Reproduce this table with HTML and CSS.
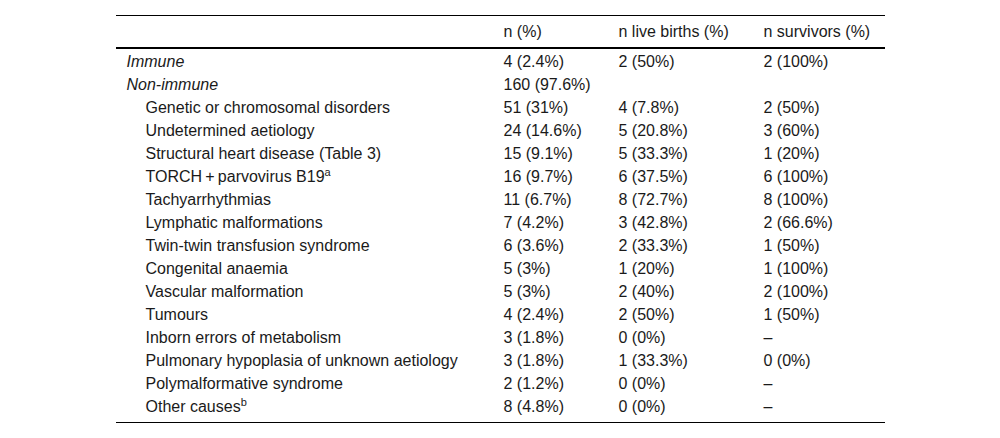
FILE: index.html
```
<!DOCTYPE html>
<html>
<head>
<meta charset="utf-8">
<link rel="stylesheet" href="styles.css">
</head>
<body>
<table class="tbl">
  <colgroup>
    <col class="c1"><col class="c2"><col class="c3"><col class="c4">
  </colgroup>
  <thead>
    <tr><th></th><th>n (%)</th><th>n live births (%)</th><th>n survivors (%)</th></tr>
  </thead>
  <tbody>
    <tr><td><i>Immune</i></td><td>4 (2.4%)</td><td>2 (50%)</td><td>2 (100%)</td></tr>
    <tr><td><i>Non-immune</i></td><td>160 (97.6%)</td><td></td><td></td></tr>
    <tr><td class="ind">Genetic or chromosomal disorders</td><td>51 (31%)</td><td>4 (7.8%)</td><td>2 (50%)</td></tr>
    <tr><td class="ind">Undetermined aetiology</td><td>24 (14.6%)</td><td>5 (20.8%)</td><td>3 (60%)</td></tr>
    <tr><td class="ind">Structural heart disease (Table 3)</td><td>15 (9.1%)</td><td>5 (33.3%)</td><td>1 (20%)</td></tr>
    <tr><td class="ind">TORCH&thinsp;+&thinsp;parvovirus B19<sup>a</sup></td><td>16 (9.7%)</td><td>6 (37.5%)</td><td>6 (100%)</td></tr>
    <tr><td class="ind">Tachyarrhythmias</td><td>11 (6.7%)</td><td>8 (72.7%)</td><td>8 (100%)</td></tr>
    <tr><td class="ind">Lymphatic malformations</td><td>7 (4.2%)</td><td>3 (42.8%)</td><td>2 (66.6%)</td></tr>
    <tr><td class="ind">Twin-twin transfusion syndrome</td><td>6 (3.6%)</td><td>2 (33.3%)</td><td>1 (50%)</td></tr>
    <tr><td class="ind">Congenital anaemia</td><td>5 (3%)</td><td>1 (20%)</td><td>1 (100%)</td></tr>
    <tr><td class="ind">Vascular malformation</td><td>5 (3%)</td><td>2 (40%)</td><td>2 (100%)</td></tr>
    <tr><td class="ind">Tumours</td><td>4 (2.4%)</td><td>2 (50%)</td><td>1 (50%)</td></tr>
    <tr><td class="ind">Inborn errors of metabolism</td><td>3 (1.8%)</td><td>0 (0%)</td><td>–</td></tr>
    <tr><td class="ind">Pulmonary hypoplasia of unknown aetiology</td><td>3 (1.8%)</td><td>1 (33.3%)</td><td>0 (0%)</td></tr>
    <tr><td class="ind">Polymalformative syndrome</td><td>2 (1.2%)</td><td>0 (0%)</td><td>–</td></tr>
    <tr class="last"><td class="ind">Other causes<sup>b</sup></td><td>8 (4.8%)</td><td>0 (0%)</td><td>–</td></tr>
  </tbody>
</table>
</body>
</html>
```
FILE: styles.css
```
html, body {
  margin: 0;
  padding: 0;
  background: #fff;
}
body {
  padding-top: 15px;
  font-family: "Liberation Sans", Arial, sans-serif;
  font-size: 16px;
  color: #1a1a1a;
}
.tbl {
  width: 769px;
  margin: 0 auto;
  border-collapse: collapse;
  table-layout: fixed;
  border-top: 1px solid #000;
  border-bottom: 1px solid #000;
}
.c1 { width: 377px; }
.c2 { width: 115px; }
.c3 { width: 145px; }
.c4 { width: 132px; }
.tbl th {
  font-weight: normal;
  text-align: left;
  line-height: 17px;
  padding: 7px 0 7px 11px;
  border-bottom: 2px solid #000;
}
.tbl td {
  line-height: 17px;
  padding: 4px 0 2px 11px;
  white-space: nowrap;
}
.tbl td.ind {
  padding-left: 30px;
}
.tbl tr.last td {
  padding-bottom: 7px;
}
sup {
  font-size: 11px;
  line-height: 0;
  vertical-align: 6px;
}
```
